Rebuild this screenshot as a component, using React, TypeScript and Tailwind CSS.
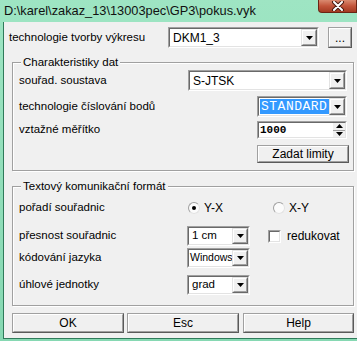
import React from "react";

const font = "font-['Liberation_Sans',Arial,sans-serif]";

const Sunken = ({ className = "", children }: { className?: string; children?: React.ReactNode }) => (
  <div className={`border border-t-[#a0a0a0] border-l-[#a0a0a0] border-r-white border-b-white ${className}`}>
    <div className="w-full h-full border border-t-[#696969] border-l-[#696969] border-r-[#e3e3e3] border-b-[#e3e3e3] bg-white flex">
      {children}
    </div>
  </div>
);

const Raised = ({ className = "", children }: { className?: string; children?: React.ReactNode }) => (
  <div className={`border border-t-[#e3e3e3] border-l-[#e3e3e3] border-r-[#696969] border-b-[#696969] bg-[#f0f0f0] ${className}`}>
    <div className="w-full h-full border border-t-white border-l-white border-r-[#a0a0a0] border-b-[#a0a0a0] flex items-center justify-center">
      {children}
    </div>
  </div>
);

const Arrow = ({ up = false }: { up?: boolean }) => (
  <svg width="7" height="4" viewBox="0 0 7 4" className="block">
    {up ? <polygon points="3.5,0 7,4 0,4" fill="#000" /> : <polygon points="0,0 7,0 3.5,4" fill="#000" />}
  </svg>
);

interface ComboProps {
  width: string;
  height: string;
  text: string;
  textCls?: string;
  selected?: boolean;
}

const Combo = ({ width, height, text, textCls = "text-[11.5px] pl-[3px]", selected = false }: ComboProps) => (
  <Sunken className={`${width} ${height} shrink-0`}>
    <div className="flex-1 flex items-center min-w-0 overflow-hidden">
      {selected ? (
        <span className={`ml-[1px] h-[calc(100%-2px)] flex-1 flex items-center bg-[#3399ff] text-white pl-[1px] ${textCls}`}>
          {text}
        </span>
      ) : (
        <span className={`text-black whitespace-nowrap ${textCls}`}>{text}</span>
      )}
    </div>
    <Raised className="w-[16px] h-full shrink-0">
      <Arrow />
    </Raised>
  </Sunken>
);

const Btn = ({ className = "", children }: { className?: string; children?: React.ReactNode }) => (
  <div className={`border border-t-[#a0a0a0] border-l-[#a0a0a0] border-r-[#5a5a5a] border-b-[#5a5a5a] bg-[#f0f0f0] ${className}`}>
    <div className="w-full h-full border border-t-white border-l-white border-r-[#a0a0a0] border-b-[#a0a0a0] flex items-center justify-center text-[12px] text-black">
      {children}
    </div>
  </div>
);

const Radio = ({ checked = false, label }: { checked?: boolean; label: string }) => (
  <div className="flex items-center">
    <div className="w-[12px] h-[12px] rounded-full border border-t-[#a0a0a0] border-l-[#a0a0a0] border-r-[#e3e3e3] border-b-[#e3e3e3] bg-[#fbfbfb] flex items-center justify-center">
      {checked && <div className="w-[4px] h-[4px] rounded-full bg-black" />}
    </div>
    <span className="ml-[4px] text-[12px]">{label}</span>
  </div>
);

const Group = ({ title, className = "", children }: { title: string; className?: string; children?: React.ReactNode }) => (
  <div className={`relative ml-[8px] w-[342px] border border-[#a0a0a0] shadow-[inset_1px_1px_0_#fff,1px_1px_0_#fff] ${className}`}>
    <span className="absolute -top-[8px] left-[8px] bg-[#f0f0f0] px-[2px] text-[11.5px] leading-[14px]">{title}</span>
    {children}
  </div>
);

export default function App() {
  return (
    <div className={`relative w-[357px] h-[341px] overflow-hidden bg-gradient-to-b from-[#9ee5c3] to-[#86d8b2] text-black ${font}`}>
      {/* title bar */}
      <div className="h-[22px] flex items-center pl-[4px] text-[12.8px] text-[#111]">
        D:\karel\zakaz_13\13003pec\GP3\pokus.vyk
      </div>
      <div className="absolute top-0 right-0 w-[39px] h-[13px] rounded-bl-[4px] border border-t-0 border-[#6b2414] bg-gradient-to-b from-[#d98a70] via-[#c2543a] to-[#a33b22] flex items-center justify-center">
        <svg width="14" height="10" viewBox="0 0 14 10">
          <path d="M3 1 L11 9 M11 1 L3 9" stroke="#4a1a10" strokeWidth="4" strokeLinecap="round" />
          <path d="M3 1 L11 9 M11 1 L3 9" stroke="#fff" strokeWidth="2" strokeLinecap="round" />
        </svg>
      </div>

      {/* client */}
      <div className="ml-[3px] h-[317px] border-l border-b border-[#2f7a5a] bg-[#f0f0f0]">
        <div className="flex items-center pt-[5px]">
          <span className="w-[164px] pl-[5px] text-[11.5px]">technologie tvorby výkresu</span>
          <Combo width="w-[151px]" height="h-[21px]" text="DKM1_3" textCls="text-[12px] pl-[3px]" />
          <Btn className="ml-[9px] w-[24px] h-[21px]">...</Btn>
        </div>

        <Group title="Charakteristiky dat" className="mt-[14px] h-[109px] pt-[7px] pl-[6px] pr-[6px]">
          <div className="flex items-center justify-between h-[21px]">
            <span className="text-[11.5px]">souřad. soustava</span>
            <Combo width="w-[159px]" height="h-[21px]" text="S-JTSK" textCls="text-[12px] pl-[3px]" />
          </div>
          <div className="flex items-center justify-between h-[21px] mt-[5px]">
            <span className="text-[11.5px]">technologie číslování bodů</span>
            <Combo
              width="w-[90px]"
              height="h-[21px]"
              text="STANDARD"
              selected
              textCls="text-[13px] font-['Liberation_Mono',monospace] tracking-[0.5px]"
            />
          </div>
          <div className="flex items-center justify-between h-[18px] mt-[4px]">
            <span className="text-[11.5px]">vztažné měřítko</span>
            <Sunken className="w-[90px] h-[18px]">
              <div className="flex-1 flex items-center pl-[1px] text-[11px] font-['Liberation_Mono',monospace] font-bold">1000</div>
              <div className="w-[12px] h-full flex flex-col bg-[#f0f0f0]">
                <div className="flex-1 flex items-center justify-center border-b border-[#a0a0a0]">
                  <Arrow up />
                </div>
                <div className="flex-1 flex items-center justify-center">
                  <Arrow />
                </div>
              </div>
            </Sunken>
          </div>
          <div className="flex justify-end mt-[6px] -mr-[2px]">
            <Btn className="w-[92px] h-[18px]">Zadat limity</Btn>
          </div>
        </Group>

        <Group title="Textový komunikační formát" className="mt-[15px] h-[120px] pt-[13px] pl-[6px]">
          <div className="flex items-center h-[16px]">
            <span className="w-[169px] text-[11.5px]">pořadí souřadnic</span>
            <div className="w-[85px]">
              <Radio checked label="Y-X" />
            </div>
            <Radio label="X-Y" />
          </div>
          <div className="flex items-center h-[20px] mt-[10px]">
            <span className="w-[168px] text-[11.5px]">přesnost souřadnic</span>
            <Combo width="w-[63px]" height="h-[20px]" text="1 cm" />
            <Sunken className="ml-[18px] w-[13px] h-[13px]" />
            <span className="ml-[6px] text-[12px]">redukovat</span>
          </div>
          <div className="flex items-center h-[20px] mt-[2px]">
            <span className="w-[168px] text-[11.5px]">kódování jazyka</span>
            <Combo width="w-[63px]" height="h-[20px]" text="Windows" textCls="text-[10.5px] pl-[1px]" />
          </div>
          <div className="flex items-center h-[20px] mt-[7px]">
            <span className="w-[168px] text-[11.5px]">úhlové jednotky</span>
            <Combo width="w-[63px]" height="h-[20px]" text="grad" />
          </div>
        </Group>

        <div className="flex ml-[8px] mt-[7px]">
          <Btn className="w-[112px] h-[20px]">OK</Btn>
          <Btn className="ml-[3px] w-[112px] h-[20px]">Esc</Btn>
          <Btn className="ml-[4px] w-[111px] h-[20px]">Help</Btn>
        </div>
      </div>
    </div>
  );
}
